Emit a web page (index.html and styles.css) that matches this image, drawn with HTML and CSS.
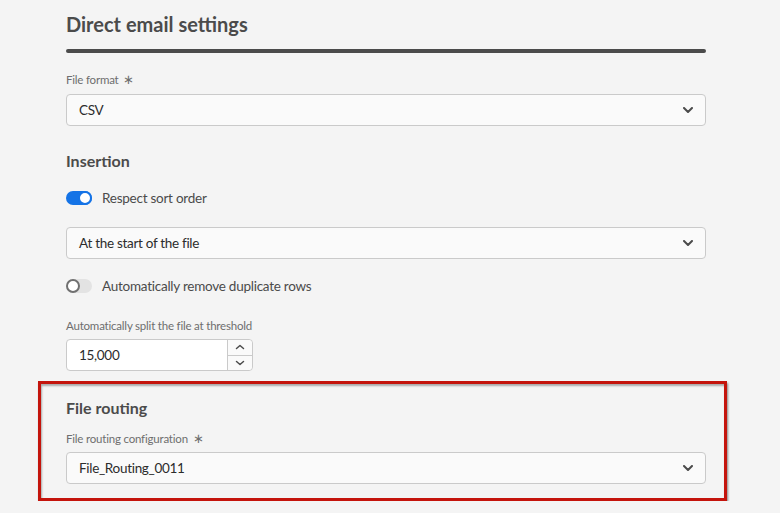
FILE: index.html
```html
<!DOCTYPE html>
<html lang="en">
<head>
<meta charset="utf-8">
<title>Direct email settings</title>
<link rel="stylesheet" href="styles.css">
</head>
<body>
<main class="page">
  <h1 class="title">Direct email settings</h1>
  <div class="divider"></div>

  <div class="field">
    <div class="label">File format <span class="req">∗</span></div>
    <div class="select">
      <span class="value">CSV</span>
      <svg class="chev" width="10" height="6" viewBox="0 0 10 6"><path d="M1 1 L5 5 L9 1" fill="none" stroke="#4b4b4b" stroke-width="2" stroke-linecap="round" stroke-linejoin="round"/></svg>
    </div>
  </div>

  <h2 class="heading">Insertion</h2>

  <div class="toggle-row">
    <span class="switch on"><span class="knob"></span></span>
    <span class="toggle-label">Respect sort order</span>
  </div>

  <div class="select select-mid">
    <span class="value">At the start of the file</span>
    <svg class="chev" width="10" height="6" viewBox="0 0 10 6"><path d="M1 1 L5 5 L9 1" fill="none" stroke="#4b4b4b" stroke-width="2" stroke-linecap="round" stroke-linejoin="round"/></svg>
  </div>

  <div class="toggle-row">
    <span class="switch off"><span class="knob"></span></span>
    <span class="toggle-label">Automatically remove duplicate rows</span>
  </div>

  <div class="field field-split">
    <div class="label label-tight">Automatically split the file at threshold</div>
    <div class="number">
      <span class="num-value">15,000</span>
      <span class="stepper">
        <span class="step step-up"><svg width="10" height="6" viewBox="0 0 10 6"><path d="M1.5 4.5 L5 1.5 L8.5 4.5" fill="none" stroke="#4b4b4b" stroke-width="1.5" stroke-linecap="round" stroke-linejoin="round"/></svg></span>
        <span class="step"><svg width="10" height="6" viewBox="0 0 10 6"><path d="M1.5 1.5 L5 4.5 L8.5 1.5" fill="none" stroke="#4b4b4b" stroke-width="1.5" stroke-linecap="round" stroke-linejoin="round"/></svg></span>
      </span>
    </div>
  </div>

  <section class="highlight">
    <h2 class="heading heading-box">File routing</h2>
    <div class="field field-box">
      <div class="label">File routing configuration <span class="req">∗</span></div>
      <div class="select">
        <span class="value">File_Routing_0011</span>
        <svg class="chev" width="10" height="6" viewBox="0 0 10 6"><path d="M1 1 L5 5 L9 1" fill="none" stroke="#4b4b4b" stroke-width="2" stroke-linecap="round" stroke-linejoin="round"/></svg>
      </div>
    </div>
  </section>
</main>
</body>
</html>
```
FILE: styles.css
```css
html, body {
  margin: 0;
  padding: 0;
  background: #f4f4f4;
}
body {
  font-family: Lato, "Open Sans", sans-serif;
  color: #4b4b4b;
}
.page {
  width: 640px;
  margin-left: 66px;
  display: flex;
  flex-direction: column;
}
.title {
  margin: 12px 0 0;
  font-size: 20px;
  line-height: 24px;
  font-weight: 700;
  color: #4b4b4b;
}
.divider {
  margin-top: 13px;
  height: 4px;
  border-radius: 2px;
  background: #4b4b4b;
}
.field {
  display: flex;
  flex-direction: column;
  gap: 6px;
  margin-top: 18px;
}
.label {
  font-size: 11.5px;
  line-height: 16px;
  color: #6e6e6e;
  letter-spacing: -0.2px;
}
.label-tight { margin-bottom: -1px; }
.req {
  font-size: 13px;
  margin-left: 2px;
}
.select {
  box-sizing: border-box;
  height: 32px;
  border: 1px solid #cacaca;
  border-radius: 4px;
  background: #fafafa;
  display: flex;
  align-items: center;
  justify-content: space-between;
  padding: 0 12px 0 12px;
}
.value {
  font-size: 13.5px;
  letter-spacing: -0.3px;
  color: #2c2c2c;
}
.chev { display: block; }
.heading {
  margin: 25px 0 0;
  font-size: 16px;
  line-height: 20px;
  font-weight: 700;
  color: #4b4b4b;
}
.toggle-row {
  margin-top: 17px;
  height: 20px;
  display: flex;
  align-items: center;
  gap: 10px;
}
.switch {
  position: relative;
  width: 26px;
  height: 14px;
  border-radius: 7px;
  flex: none;
}
.switch .knob {
  position: absolute;
  top: 0;
  width: 14px;
  height: 14px;
  box-sizing: border-box;
  border-radius: 50%;
  background: #ffffff;
}
.switch.on { background: #1473e6; }
.switch.on .knob {
  right: 0;
  border: 2px solid #1473e6;
}
.switch.off { background: #e3e3e3; }
.switch.off .knob {
  left: 0;
  border: 2px solid #707070;
}
.toggle-label {
  font-size: 13.5px;
  letter-spacing: -0.25px;
  color: #4b4b4b;
}
.select-mid { margin-top: 19px; }
.field-split { margin-top: 22px; }
.number {
  box-sizing: border-box;
  width: 187px;
  height: 32px;
  display: flex;
  border: 1px solid #cacaca;
  border-radius: 4px;
  background: #ffffff;
}
.num-value {
  flex: 1;
  display: flex;
  align-items: center;
  padding-left: 12px;
  font-size: 13.5px;
  letter-spacing: -0.3px;
  color: #2c2c2c;
}
.stepper {
  width: 24px;
  display: flex;
  flex-direction: column;
  border-left: 1px solid #cacaca;
  background: #fafafa;
  border-radius: 0 4px 4px 0;
}
.step {
  flex: 1;
  display: flex;
  align-items: center;
  justify-content: center;
}
.step-up { border-bottom: 1px solid #cacaca; }
.highlight {
  margin: 10px -21px 0 -28px;
  border: 3px solid #c4140c;
  padding: 14px 18px 14px 25px;
  box-shadow: 1px 2px 2px rgba(0, 0, 0, 0.45), inset 1px 2px 2px rgba(0, 0, 0, 0.3);
}
.heading-box { margin-top: 0; }
.field-box { margin-top: 12px; gap: 5px; }
```
